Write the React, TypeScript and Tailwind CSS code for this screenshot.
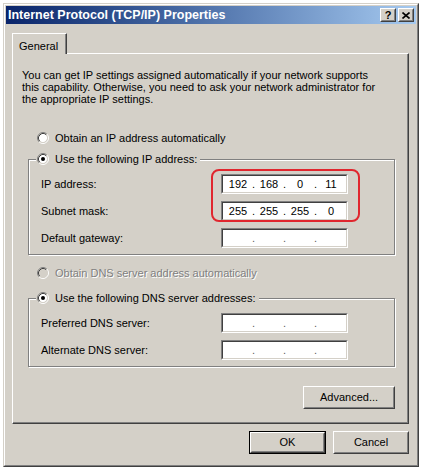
import React from 'react';

// classic 3D radio button, drawn as a 12px icon
function Radio({ checked = false, disabled = false }: { checked?: boolean; disabled?: boolean }) {
  return (
    <svg width="12" height="12" viewBox="0 0 12 12" className="shrink-0">
      <circle cx="6" cy="6" r="4.2" fill={disabled ? '#d4d0c8' : '#ffffff'} />
      <path d="M2.11 9.89 A5.5 5.5 0 0 1 9.89 2.11" fill="none" stroke="#808080" strokeWidth="1" />
      <path d="M2.82 9.18 A4.5 4.5 0 0 1 9.18 2.82" fill="none" stroke="#404040" strokeWidth="1" />
      <path d="M9.89 2.11 A5.5 5.5 0 0 1 2.11 9.89" fill="none" stroke="#ffffff" strokeWidth="1" />
      <path d="M9.18 2.82 A4.5 4.5 0 0 1 2.82 9.18" fill="none" stroke="#d4d0c8" strokeWidth="1" />
      {checked && <circle cx="6" cy="6" r="2" fill="#000000" />}
    </svg>
  );
}

function IpField({ parts }: { parts?: string[] }) {
  const segs = parts ?? ['', '', '', ''];
  const dot = parts ? 'text-black' : 'text-[#606060]';
  return (
    <div className="w-[127px] h-[20px] border border-t-[#808080] border-l-[#808080] border-r-white border-b-white">
      <div className="h-full border border-t-[#404040] border-l-[#404040] border-r-[#d4d0c8] border-b-[#d4d0c8] bg-white flex items-center px-[1px] leading-none">
        <span className="flex-1 text-center">{segs[0]}</span>
        <span className={`w-[3px] text-center ${dot}`}>.</span>
        <span className="flex-1 text-center">{segs[1]}</span>
        <span className={`w-[3px] text-center ${dot}`}>.</span>
        <span className="flex-1 text-center">{segs[2]}</span>
        <span className={`w-[3px] text-center ${dot}`}>.</span>
        <span className="flex-1 text-center">{segs[3]}</span>
      </div>
    </div>
  );
}

function Row({ label, parts }: { label: string; parts?: string[] }) {
  return (
    <div className="flex items-center h-[20px]">
      <span className="w-[180px]">{label}</span>
      <IpField parts={parts} />
    </div>
  );
}

function Button({ label, width, isDefault = false }: { label: string; width: string; isDefault?: boolean }) {
  const bevel = (
    <div className="h-full border border-t-white border-l-white border-r-[#404040] border-b-[#404040]">
      <div className="h-full border border-t-[#d4d0c8] border-l-[#d4d0c8] border-r-[#808080] border-b-[#808080] flex items-center justify-center">
        {label}
      </div>
    </div>
  );
  return (
    <div className={`${width} h-[23px] ${isDefault ? 'border border-black' : ''}`}>
      {bevel}
    </div>
  );
}

function TitleButton({ children }: { children: React.ReactNode }) {
  return (
    <div className="w-[16px] h-[14px] border border-t-white border-l-white border-r-[#404040] border-b-[#404040] bg-[#d4d0c8]">
      <div className="h-full border border-t-[#d4d0c8] border-l-[#d4d0c8] border-r-[#808080] border-b-[#808080] flex items-center justify-center">
        {children}
      </div>
    </div>
  );
}

export default function App() {
  return (
    <div className="w-[423px] h-[470px] bg-white pt-[3px] pl-[3px] font-['Liberation_Sans',Arial,sans-serif] text-[11px] text-black">
      <div className="w-[416px] h-[464px] border border-t-[#d4d0c8] border-l-[#d4d0c8] border-r-[#404040] border-b-[#404040]">
        <div className="h-full border border-t-white border-l-white border-r-[#808080] border-b-[#808080] bg-[#d4d0c8] p-px flex flex-col">
          {/* title bar */}
          <div className="h-[18px] bg-linear-to-r from-[#0a246a] to-[#a6caf0] flex items-center pl-[2px] pr-[2px]">
            <span className="flex-1 text-white font-bold text-[12.5px] leading-none">
              Internet Protocol (TCP/IP) Properties
            </span>
            <div className="flex gap-[2px]">
              <TitleButton>
                <span className="font-bold text-[11px] leading-none">?</span>
              </TitleButton>
              <TitleButton>
                <svg width="8" height="7" viewBox="0 0 8 7">
                  <path d="M0.5 0.5 L7.5 6.5 M7.5 0.5 L0.5 6.5" stroke="#000" strokeWidth="1.6" />
                </svg>
              </TitleButton>
            </div>
          </div>

          {/* tab strip */}
          <div className="mt-[9px] ml-[6px] relative z-10 -mb-px w-[55px] h-[21px] bg-[#d4d0c8] border-t border-l border-white border-r border-r-[#404040]">
            <div className="h-full border-r border-r-[#808080] pl-[6px] pt-[4px]">General</div>
          </div>

          {/* tab panel */}
          <div className="ml-[6px] w-[397px] h-[371px] border border-t-white border-l-white border-r-[#404040] border-b-[#404040]">
            <div className="h-full border-r border-b border-r-[#808080] border-b-[#808080] flex flex-col">
              <p className="ml-[9px] mt-[15px] leading-[12px]">
                You can get IP settings assigned automatically if your network supports
                <br />
                this capability. Otherwise, you need to ask your network administrator for
                <br />
                the appropriate IP settings.
              </p>

              <div className="ml-[24px] mt-[27px] h-[12px] flex items-center leading-none">
                <Radio />
                <span className="ml-[6px]">Obtain an IP address automatically</span>
              </div>

              <fieldset className="ml-[15px] mt-[9px] w-[367px] border border-[#808080] shadow-[inset_1px_1px_0_#fff,1px_1px_0_#fff]">
                <legend className="ml-[7px] pl-[1px] pr-[3px] bg-[#d4d0c8] h-[12px]">
                  <span className="inline-flex items-center h-[12px] leading-none">
                    <Radio checked />
                    <span className="ml-[6px]">Use the following IP address:</span>
                  </span>
                </legend>
                <div className="ml-[12px] mt-[9px] mb-[6px] flex flex-col gap-[7px]">
                  <div className="relative flex flex-col gap-[7px]">
                    <Row label="IP address:" parts={['192', '168', '0', '11']} />
                    <Row label="Subnet mask:" parts={['255', '255', '255', '0']} />
                    <div className="absolute left-[170px] top-[-5px] w-[149px] h-[53px] border-2 border-[#e0262e] rounded-[8px]" />
                  </div>
                  <Row label="Default gateway:" />
                </div>
              </fieldset>

              <div className="ml-[24px] mt-[12px] h-[12px] flex items-center leading-none">
                <Radio disabled />
                <span className="ml-[6px] text-[#808080] [text-shadow:1px_1px_0_#fff]">
                  Obtain DNS server address automatically
                </span>
              </div>

              <fieldset className="ml-[15px] mt-[13px] w-[367px] border border-[#808080] shadow-[inset_1px_1px_0_#fff,1px_1px_0_#fff]">
                <legend className="ml-[7px] pl-[1px] pr-[3px] bg-[#d4d0c8] h-[12px]">
                  <span className="inline-flex items-center h-[12px] leading-none">
                    <Radio checked />
                    <span className="ml-[6px]">Use the following DNS server addresses:</span>
                  </span>
                </legend>
                <div className="ml-[12px] mt-[9px] mb-[6px] flex flex-col gap-[7px]">
                  <Row label="Preferred DNS server:" />
                  <Row label="Alternate DNS server:" />
                </div>
              </fieldset>

              <div className="ml-[290px] mt-[19px]">
                <Button label="Advanced..." width="w-[92px]" />
              </div>
            </div>
          </div>

          {/* dialog buttons */}
          <div className="mt-[7px] pr-[7px] flex justify-end gap-[7px]">
            <Button label="OK" width="w-[77px]" isDefault />
            <Button label="Cancel" width="w-[76px]" />
          </div>
        </div>
      </div>
    </div>
  );
}
